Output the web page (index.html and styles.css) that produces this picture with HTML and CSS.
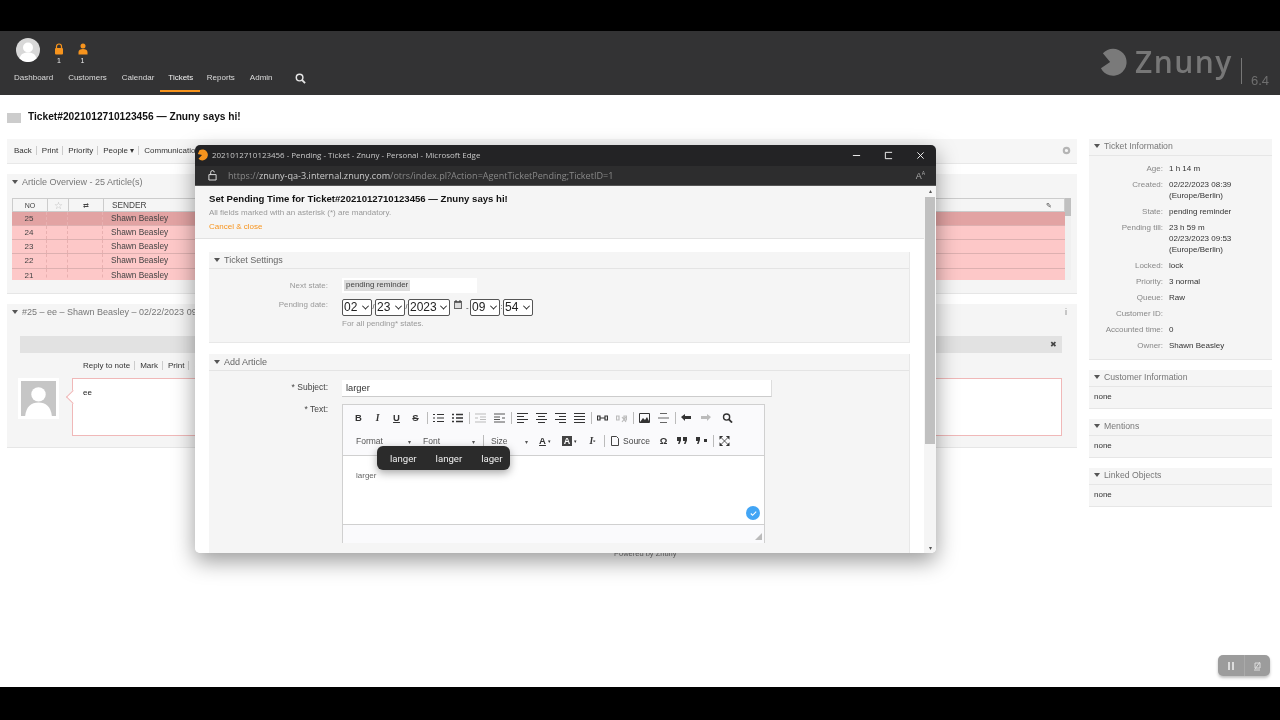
FILE: index.html
```html
<!DOCTYPE html>
<html lang="en">
<head>
    <meta charset="UTF-8">
    <title>Ticket#2021012710123456 - Znuny</title>
    <link rel="stylesheet" href="styles.css">
</head>
<body>
<div class="screen">
    <div class="topbar">
        <div class="topbar-left">
            <div class="user-row">
                <svg class="avatar" viewBox="0 0 24 24"><circle cx="12" cy="12" r="12" fill="#d8d8d8"/><circle cx="12" cy="9.5" r="5" fill="#fff"/><path d="M3.5 20.5c1-4.5 4.500-6 8.500-6s7.500 1.500 8.500 6a12 12 0 0 1-17 0z" fill="#fff"/></svg>
                <div class="counter">
                    <svg viewBox="0 0 10 12"><path d="M2.500 5V3.500a2.500 2.500 0 0 1 5 0V5" fill="none" stroke="#f7941d" stroke-width="1.200"/><rect x="1" y="5" width="8" height="6.500" rx="1" fill="#f7941d"/></svg>
                    <span>1</span>
                </div>
                <div class="counter">
                    <svg viewBox="0 0 10 12"><circle cx="5" cy="3" r="2.500" fill="#f7941d"/><path d="M0.500 11.500V9c0-2 2-3 4.500-3s4.500 1 4.500 3v2.500z" fill="#f7941d"/></svg>
                    <span>1</span>
                </div>
            </div>
            <nav class="nav">
                <a>Dashboard</a>
                <a>Customers</a>
                <a>Calendar</a>
                <a class="active">Tickets</a>
                <a>Reports</a>
                <a>Admin</a>
                <a class="nav-search"><svg viewBox="0 0 12 12" width="11" height="11"><circle cx="5" cy="5" r="3.600" fill="none" stroke="#e6e6e6" stroke-width="1.600"/><path d="M7.800 7.800L11 11" stroke="#e6e6e6" stroke-width="2"/></svg></a>
            </nav>
        </div>
        <div class="logo">
            <svg viewBox="0 0 30 30" width="29" height="29"><path d="M4 5.500A14 14 0 1 1 2 21L11.500 14.500z" fill="#7a7a7a"/></svg>
            <span class="logo-name">Znuny</span>
            <span class="logo-bar"></span>
            <span class="logo-ver">6.4</span>
        </div>
    </div>

    <div class="page">
        <h1 class="ticket-title"><span class="title-flag"></span>Ticket#2021012710123456 — Znuny says hi!</h1>
        <div class="columns">
            <div class="col-main">
                <div class="actions">
                    <a>Back</a><a>Print</a><a>Priority</a><a>People ▾</a><a>Communication</a>
                    <svg class="gear" viewBox="0 0 10 10" width="9" height="9"><circle cx="5" cy="5" r="3" fill="none" stroke="#b5b5b5" stroke-width="2.400"/></svg>
                </div>

                <section class="widget overview">
                    <div class="widget-head"><i class="tri"></i>Article Overview - 25 Article(s)</div>
                    <div class="table-outer">
                        <div class="table-wrap">
                            <div class="trow thead"><span class="c-no">NO</span><span class="c-star">☆</span><span class="c-dir">⇄</span><span class="c-sender">SENDER</span><span class="c-rest">✎</span></div>
                            <div class="trow sel"><span class="c-no">25</span><span class="c-star"></span><span class="c-dir"></span><span class="c-sender">Shawn Beasley</span><span class="c-rest"></span></div>
                            <div class="trow"><span class="c-no">24</span><span class="c-star"></span><span class="c-dir"></span><span class="c-sender">Shawn Beasley</span><span class="c-rest"></span></div>
                            <div class="trow"><span class="c-no">23</span><span class="c-star"></span><span class="c-dir"></span><span class="c-sender">Shawn Beasley</span><span class="c-rest"></span></div>
                            <div class="trow"><span class="c-no">22</span><span class="c-star"></span><span class="c-dir"></span><span class="c-sender">Shawn Beasley</span><span class="c-rest"></span></div>
                            <div class="trow last"><span class="c-no">21</span><span class="c-star"></span><span class="c-dir"></span><span class="c-sender">Shawn Beasley</span><span class="c-rest"></span></div>
                        </div>
                        <div class="table-scroll"><div class="table-thumb"></div></div>
                    </div>
                </section>

                <section class="widget article">
                    <div class="widget-head"><i class="tri"></i>#25 – ee – Shawn Beasley – 02/22/2023 09:39<span class="info-dot">i</span></div>
                    <div class="article-bar"><span>✖</span></div>
                    <div class="article-links"><a>Reply to note</a><a>Mark</a><a>Print</a><a>Split</a></div>
                    <div class="article-body">
                        <div class="article-avatar">
                            <svg viewBox="0 0 34 34"><rect width="34" height="34" fill="#c6c6c6"/><circle cx="17" cy="13" r="7" fill="#fff"/><path d="M4 34c1-9 6-13 13-13s12 4 13 13z" fill="#fff"/></svg>
                        </div>
                        <div class="bubble">ee</div>
                    </div>
                </section>
            </div>

            <aside class="col-side">
                <section class="side-box">
                    <div class="side-head"><i class="tri"></i>Ticket Information</div>
                    <dl class="info">
                        <dt>Age:</dt><dd>1 h 14 m</dd>
                        <dt>Created:</dt><dd>02/22/2023 08:39<br>(Europe/Berlin)</dd>
                        <dt>State:</dt><dd>pending reminder</dd>
                        <dt>Pending till:</dt><dd>23 h 59 m<br>02/23/2023 09:53<br>(Europe/Berlin)</dd>
                        <dt>Locked:</dt><dd>lock</dd>
                        <dt>Priority:</dt><dd>3 normal</dd>
                        <dt>Queue:</dt><dd>Raw</dd>
                        <dt>Customer ID:</dt><dd>&nbsp;</dd>
                        <dt>Accounted time:</dt><dd>0</dd>
                        <dt>Owner:</dt><dd>Shawn Beasley</dd>
                    </dl>
                </section>
                <section class="side-box">
                    <div class="side-head"><i class="tri"></i>Customer Information</div>
                    <div class="side-none">none</div>
                </section>
                <section class="side-box">
                    <div class="side-head"><i class="tri"></i>Mentions</div>
                    <div class="side-none">none</div>
                </section>
                <section class="side-box">
                    <div class="side-head"><i class="tri"></i>Linked Objects</div>
                    <div class="side-none">none</div>
                </section>
            </aside>
        </div>
        <div class="powered">Powered by Znuny</div>

        <div class="rec-controls">
            <span class="rec-btn"><svg viewBox="0 0 8 10" width="8" height="10"><rect x="1" y="1" width="2" height="8" fill="#ddd"/><rect x="5" y="1" width="2" height="8" fill="#ddd"/></svg></span>
            <span class="rec-btn"><svg viewBox="0 0 10 10" width="10" height="10"><path d="M2 9h6M3 2h5v5H3zM8 1L3 8" fill="none" stroke="#ddd" stroke-width="1"/></svg></span>
        </div>

        <!-- popup window floats over the page -->
        <div class="popup">
            <div class="pop-title">
                <svg class="pop-fav" viewBox="0 0 12 12" width="12" height="12"><path d="M2.500 1.200A5.500 5.500 0 1 1 1.500 9.800L5 6 .8 5z" fill="#f7941d"/></svg>
                <span class="pop-title-text">2021012710123456 - Pending - Ticket - Znuny - Personal - Microsoft Edge</span>
                <svg class="win-btn" viewBox="0 0 10 10"><path d="M1 5h8" stroke="#fff" stroke-width="1"/></svg>
                <svg class="win-btn" viewBox="0 0 10 10"><path d="M9 1.500H1.500v7H9" fill="none" stroke="#fff" stroke-width="1"/></svg>
                <svg class="win-btn" viewBox="0 0 10 10"><path d="M1.500 1.500l7 7M8.500 1.500l-7 7" stroke="#fff" stroke-width="1"/></svg>
            </div>
            <div class="pop-addr">
                <svg class="lock" viewBox="0 0 10 12" width="9" height="11"><path d="M1 5h8v6H1zM3 5V2.500a2 2 0 0 1 4 0" fill="none" stroke="#eee" stroke-width="1"/></svg>
                <span class="url"><b>https://</b>znuny-qa-3.internal.znuny.com<b>/otrs/index.pl?Action=AgentTicketPending;TicketID=1</b></span>
                <span class="read-icon">A<sup>A</sup></span>
            </div>
            <div class="pop-scroll">
                <div class="pop-content">
                    <div class="pop-header">
                        <h2>Set Pending Time for Ticket#2021012710123456 — Znuny says hi!</h2>
                        <p>All fields marked with an asterisk (*) are mandatory.</p>
                        <a>Cancel &amp; close</a>
                    </div>
                    <div class="pop-body">
                        <section class="pop-widget">
                            <div class="pop-widget-head"><i class="tri"></i>Ticket Settings</div>
                            <div class="form-row state-row">
                                <label>Next state:</label>
                                <div class="state-input"><span>pending reminder</span></div>
                            </div>
                            <div class="form-row date-row">
                                <label>Pending date:</label>
                                <div class="date-fields">
                                    <span class="sel-box">02<em></em></span><span class="sep">/</span>
                                    <span class="sel-box">23<em></em></span><span class="sep">/</span>
                                    <span class="sel-box wide">2023<em></em></span>
                                    <svg class="cal" viewBox="0 0 8 9" width="8" height="9"><path d="M0 1h8v8H0z" fill="#666"/><path d="M1 3h6v5H1z" fill="#ddd"/><path d="M2 0v2M6 0v2" stroke="#333"/></svg>
                                    <span class="dash">-</span>
                                    <span class="sel-box">09<em></em></span><span class="sep">:</span>
                                    <span class="sel-box">54<em></em></span>
                                </div>
                            </div>
                            <div class="form-hint">For all pending* states.</div>
                        </section>
                        <section class="pop-widget add">
                            <div class="pop-widget-head"><i class="tri"></i>Add Article</div>
                            <div class="form-row subject-row">
                                <label class="req">* Subject:</label>
                                <div class="subject-input">larger</div>
                            </div>
                            <div class="form-row text-row">
                                <label class="req">* Text:</label>
                                <div class="editor">
                                    <div class="ed-toolbar">
                                        <div class="ed-line">
                                            <span class="ic tb">B</span><span class="ic tb it">I</span><span class="ic tb un">U</span><span class="ic tb st">S</span><span class="ed-sep"></span>
                                            <span class="ic"><svg viewBox="0 0 11 10"><path d="M0 1.500h2M0 5h2M0 8.500h2M4 1.500h7M4 5h7M4 8.500h7" stroke="#333" stroke-width="1.200"/></svg></span>
                                            <span class="ic"><svg viewBox="0 0 11 10"><path d="M0 1.500h2M0 5h2M0 8.500h2M4 1.500h7M4 5h7M4 8.500h7" stroke="#333" stroke-width="1.300"/></svg></span><span class="ed-sep"></span>
                                            <span class="ic"><svg viewBox="0 0 11 10"><path d="M0 1h11M5 4h6M5 6.500h6M0 9h11M0 5h3" stroke="#bbb" stroke-width="1"/></svg></span>
                                            <span class="ic"><svg viewBox="0 0 11 10"><path d="M0 1h11M0 4h6M0 6.500h6M0 9h11M8 5h3" stroke="#555" stroke-width="1"/></svg></span><span class="ed-sep"></span>
                                            <span class="ic"><svg viewBox="0 0 11 10"><path d="M0 .500h11M0 3.500h7M0 6.500h11M0 9.500h7" stroke="#333"/></svg></span>
                                            <span class="ic"><svg viewBox="0 0 11 10"><path d="M0 .500h11M2 3.500h7M0 6.500h11M2 9.500h7" stroke="#333"/></svg></span>
                                            <span class="ic"><svg viewBox="0 0 11 10"><path d="M0 .500h11M4 3.500h7M0 6.500h11M4 9.500h7" stroke="#333"/></svg></span>
                                            <span class="ic"><svg viewBox="0 0 11 10"><path d="M0 .500h11M0 3.500h11M0 6.500h11M0 9.500h11" stroke="#333"/></svg></span><span class="ed-sep"></span>
                                            <span class="ic"><svg viewBox="0 0 11 10"><path d="M.5 3h2.500v4H.5zM8 3h2.500v4H8zM3 5h5" fill="none" stroke="#333" stroke-width="1.200"/></svg></span>
                                            <span class="ic"><svg viewBox="0 0 11 10"><path d="M.5 3h2.500v4H.5zM8 3h2.500v4H8zM6 4l4 5M10 4l-4 5" fill="none" stroke="#bbb" stroke-width="1.200"/></svg></span><span class="ed-sep"></span>
                                            <span class="ic"><svg viewBox="0 0 11 10"><path d="M.5.500h10v9H.5z" fill="none" stroke="#333"/><path d="M1 9l3-4 2 2 2-3 2.500 5z" fill="#333"/></svg></span>
                                            <span class="ic"><svg viewBox="0 0 11 10"><path d="M2 .500h7M0 5h11M2 9.500h7" stroke="#666"/></svg></span><span class="ed-sep"></span>
                                            <span class="ic"><svg viewBox="0 0 11 10"><path d="M0 4l4-3v2h6v3H4v2z" fill="#333"/></svg></span>
                                            <span class="ic"><svg viewBox="0 0 11 10"><path d="M11 4L7 1v2H1v3h6v2z" fill="#bbb"/></svg></span><span class="ed-gap"></span>
                                            <span class="ic"><svg viewBox="0 0 11 11"><circle cx="4.500" cy="4.500" r="3.400" fill="none" stroke="#333" stroke-width="1.500"/><path d="M7 7l3.500 3.500" stroke="#333" stroke-width="2"/></svg></span>
                                        </div>
                                        <div class="ed-line second">
                                            <span class="combo c-format">Format<em>▾</em></span><span class="combo c-font">Font<em>▾</em></span><span class="ed-sep"></span><span class="combo c-size">Size<em>▾</em></span>
                                            <span class="ic i-color"><u>A</u><small>▾</small></span><span class="ic i-back"><i>A</i><small>▾</small></span><span class="ic tb it">I<sub>x</sub></span><span class="ed-sep"></span>
                                            <span class="source"><svg viewBox="0 0 8 10" width="8" height="10"><path d="M.5.500h5l2 2v7h-7z" fill="none" stroke="#444"/></svg>Source</span>
                                            <span class="ic tb">Ω</span>
                                            <span class="ic"><svg viewBox="0 0 11 10"><path d="M0 1h4v3.500L2.500 8H1l1-3H0zM6 1h4v3.500L8.500 8H7l1-3H6z" fill="#333"/></svg></span>
                                            <span class="ic"><svg viewBox="0 0 11 10"><path d="M4 1v3L2.500 8H1l1-3H0V1zM8 3h3v3H8zM6 8l3-3" fill="#333"/></svg></span><span class="ed-sep"></span>
                                            <span class="ic"><svg viewBox="0 0 11 11"><path d="M0 0h4L0 4zM11 0v4L7 0zM0 11V7l4 4zM11 11H7l4-4z" fill="#333"/><path d="M2 2l7 7M9 2l-7 7" stroke="#333" stroke-width=".9"/></svg></span>
                                        </div>
                                    </div>
                                    <div class="ed-area">
                                        <span class="ed-text">larger</span>
                                        <span class="spell-check"><svg viewBox="0 0 10 10" width="9" height="9"><path d="M2 5l2 2 4-4" fill="none" stroke="#fff" stroke-width="1.200"/></svg></span>
                                    </div>
                                    <div class="ed-foot"><i class="resize"></i></div>
                                </div>
                            </div>
                            <div class="suggest"><span>langer</span><span>langer</span><span>lager</span></div>
                        </section>
                    </div>
                </div>
                <div class="pop-scrollbar"><span class="arrow">▴</span><div class="thumb"></div><span class="arrow">▾</span></div>
            </div>
        </div>
    </div>
</div>
</body>
</html>
```

FILE: styles.css
```css
* { box-sizing: border-box; }
html, body { margin: 0; height: 100%; }
body { background: #000; font-family: "Liberation Sans", Arial, sans-serif; font-size: 8px; color: #333; overflow: hidden; }

/* the source is a compressed video frame, a little soft */
.screen { height: 720px; padding: 31px 0 33px; filter: blur(.35px); }

/* header */
.topbar { height: 64px; background: #333334; display: flex; justify-content: space-between; }
.topbar-left { padding: 7px 0 0 14px; }
.user-row { display: flex; height: 26px; align-items: flex-start; padding-left: 2px; }
.avatar { width: 24px; height: 24px; margin-right: 14px; }
.counter { width: 23.500px; color: #eee; font-size: 7px; line-height: 8px; }
.counter svg { display: block; width: 10px; height: 12px; margin: 5px 0 2px 0; }
.counter span { display: block; width: 10px; text-align: center; }
.nav { display: flex; margin-top: 5px; }
.nav a { color: #dcdcdc; font-size: 8px; height: 26px; padding: 4px 0 0; margin-right: 15px; }
.nav a.active { color: #f0f0f0; border-bottom: 2px solid #f7941d; height: 23px; padding: 4px 7px 0 8px; margin: 0 6.500px 0 -9px; }
.nav-search { margin-left: 7px; }
.logo { display: flex; align-items: center; padding-right: 11px; height: 64px; color: #777; }
.logo svg { margin-right: 7px; margin-top: -1px; }
.logo-name { font-family: "Open Sans", sans-serif; font-size: 30px; font-weight: 600; line-height: 40px; letter-spacing: 1.500px; margin-top: -3px; }
.logo-bar { width: 1px; height: 26px; background: #777; margin: 15px 9px 0 8px; }
.logo-ver { font-size: 13px; margin-top: 34px; color: #6f6f6f; }

/* page */
.page { position: relative; height: 592px; background: #fff; padding: 0 8px 0 7px; }
.ticket-title { margin: 0; height: 44px; padding-top: 16px; font-size: 10.200px; line-height: 12px; color: #111; display: flex; align-items: flex-start; }
.title-flag { width: 14px; height: 10px; background: #ccc; margin: 2px 7px 0 0; }
.columns { display: flex; gap: 12px; }
.col-main { width: 1070px; }
.col-side { width: 183px; }

.actions { height: 25px; background: #f6f6f6; border-bottom: 1px solid #e8e8e8; display: flex; align-items: center; padding: 0 7px 2px; position: relative; color: #333; }
.actions a { padding-right: 4px; margin-right: 5px; border-right: 1px solid #ccc; line-height: 9px; }
.actions a:last-of-type { border: 0; }
.gear { position: absolute; right: 6px; top: 7px; }

.widget { background: #f5f5f5; border-bottom: 1px solid #e6e6e6; }
.widget-head { height: 17px; color: #777; font-size: 9px; padding: 3px 0 0 5px; position: relative; }
.tri { display: inline-block; width: 0; height: 0; border: 3.500px solid transparent; border-top: 4px solid currentColor; border-bottom: 0; margin-right: 4px; vertical-align: 1px; color: #555; }
.overview { margin-top: 10px; height: 120px; }
.overview .widget-head { height: 24px; padding-top: 3px; }
.table-outer { display: flex; margin: 0 6px 0 5px; height: 82px; }
.table-wrap { flex: 1; overflow: hidden; }
.table-scroll { width: 6px; background: #f0f0f0; }
.table-thumb { height: 18px; background: #c0c0c0; }
.trow { display: flex; height: 14.300px; line-height: 13px; background: #fdc8c8; border-bottom: 1px solid #ddb0b0; }
.trow span { border-right: 1px dashed #e8b0b0; padding: 0; text-align: center; color: #444; }
.trow.last { border-bottom: 0; }
.trow.sel { background: #e2a3a3; }
.thead { background: #f5f5f5; border: 1px solid #ccc; height: 13.500px; font-size: 7px; }
.thead span { border-right: 1px solid #ccc; }
.c-no { width: 35px; flex: none; }
.c-star { width: 21px; flex: none; font-size: 10px; color: #bbb !important; }
.c-dir { width: 35px; flex: none; }
.c-sender { width: 130px; flex: none; text-align: left !important; padding-left: 8px !important; font-size: 8.300px; }
.c-rest { flex: 1; text-align: right !important; padding-right: 12px !important; border: 0 !important; }

.article { margin-top: 10px; height: 144px; }
.info-dot { position: absolute; right: 10px; top: 3px; color: #888; }
.article-bar { margin: 15px 15px 0 13px; height: 17px; background: #e2e2e2; display: flex; justify-content: flex-end; align-items: center; padding-right: 5px; color: #444; font-size: 8px; }
.article-links { height: 25px; padding: 8px 0 0 76px; display: flex; }
.article-links a { padding-right: 4px; margin-right: 5px; border-right: 1px solid #ccc; line-height: 9px; height: 9px; }
.article-body { display: flex; padding-left: 11px; margin-right: 15px; }
.article-avatar { width: 41px; height: 41px; background: #fff; padding: 3px; }
.article-avatar svg { display: block; width: 35px; height: 35px; }
.bubble { flex: 1; margin-left: 13px; height: 58px; background: #fff; border: 1px solid #f0b8b8; padding: 9px 10px; position: relative; color: #222; }
.bubble::before { content: ""; position: absolute; left: -5px; top: 13px; width: 9px; height: 9px; background: #fff; border-left: 1px solid #f0b8b8; border-bottom: 1px solid #f0b8b8; transform: rotate(45deg); }

.side-box { background: #f5f5f5; border-bottom: 1px solid #e6e6e6; margin-bottom: 10px; }
.side-head { height: 17px; border-bottom: 1px solid #e6e6e6; color: #777; font-size: 8.700px; padding: 2px 0 0 5px; }
.info { margin: 0; display: grid; grid-template-columns: 74px 1fr; column-gap: 6px; row-gap: 5px; padding: 7px 0 8px; line-height: 11px; }
.info dt { text-align: right; color: #888; }
.info dd { margin: 0; color: #333; }
.side-none { height: 21px; padding: 5px 0 0 5px; color: #333; }
.side-box:nth-child(2) { margin-top: 2px; }

.powered { position: absolute; left: 614px; top: 454px; color: #777; font-size: 7.500px; }
.rec-controls { position: absolute; left: 1218px; top: 560px; width: 52px; height: 21px; background: #9c9c9c; border-radius: 5px; display: flex; box-shadow: 0 2px 3px rgba(0,0,0,.25); }
.rec-btn { flex: 1; display: flex; align-items: center; justify-content: center; }
.rec-btn:first-child { border-right: 1px solid #aaa; }

/* popup window */
.popup { position: absolute; left: 195px; top: 50px; width: 741px; height: 408px; border-radius: 5px; overflow: hidden; background: #f5f5f5; box-shadow: 0 8px 22px rgba(0,0,0,.4); display: flex; flex-direction: column; }
.pop-title { height: 21px; flex: none; background: #232325; display: flex; align-items: center; padding: 0 0 1px 2px; color: #ccc; }
.pop-fav { margin-right: 3px; }
.pop-title-text { flex: 1; font-family: "Open Sans", sans-serif; font-size: 7.950px; white-space: nowrap; color: #c8c8c8; }
.win-btn { width: 9px; height: 9px; margin: 0 11px 0 12px; flex: none; }
.pop-addr { height: 20px; flex: none; background: #2d2d2e; border-bottom: 1px solid #555; display: flex; align-items: center; padding: 0 11px 0 13px; }
.lock { margin-right: 11px; }
.url { flex: 1; font-family: "Open Sans", sans-serif; font-size: 9.100px; color: #ccc; white-space: nowrap; }
.url b { font-weight: 400; color: #888; }
.read-icon { color: #aaa; font-size: 9px; }
.read-icon sup { font-size: 5px; }

.pop-scroll { flex: 1; display: flex; min-height: 0; background: #fff; }
.pop-content { flex: 1; overflow: hidden; }
.pop-scrollbar { width: 12px; background: #f5f5f5; display: flex; flex-direction: column; align-items: center; font-size: 6px; color: #555; line-height: 11px; }
.pop-scrollbar .arrow { height: 11px; flex: none; }
.thumb { width: 10px; height: 247px; background: #c0c0c0; flex: none; margin-bottom: 99px; }
.pop-header { height: 53px; background: #f5f5f5; border-bottom: 1px solid #e2e2e2; padding: 7px 14px 0; }
.pop-header h2 { margin: 0; font-size: 9.600px; line-height: 11px; color: #111; }
.pop-header p { margin: 3px 0 0; font-size: 8px; line-height: 11px; color: #999; }
.pop-header a { display: block; margin-top: 3px; font-size: 8px; line-height: 11px; color: #f7941d; }
.pop-body { padding: 13px 14px 0 14px; }
.pop-widget { background: #f5f5f5; border-right: 1px solid #e8e8e8; border-bottom: 1px solid #e8e8e8; width: 701px; height: 91px; position: relative; }
.pop-widget.add { margin-top: 11px; height: 300px; }
.pop-widget-head { height: 17px; border-bottom: 1px solid #e4e4e4; color: #666; font-size: 9px; padding: 3px 0 0 5px; }
.form-row { display: flex; }
.form-row label { width: 119px; text-align: right; color: #999; flex: none; margin-right: 14px; }
.state-row { margin-top: 9px; height: 15px; align-items: center; }
.state-input { width: 135px; height: 15px; background: #fff; padding: 2px 2px; }
.state-input span { display: inline-block; background: #dcdcdc; color: #444; padding: 0 2px; line-height: 10px; height: 11px; font-size: 8px; }
.date-row { margin-top: 6px; height: 18px; }
.date-row label { padding-top: 1px; }
.date-fields { display: flex; align-items: flex-start; }
.sel-box { height: 17px; width: 30px; border: 1px solid #555; border-radius: 2px; background: #fff; font-size: 12px; line-height: 15px; color: #222; padding-left: 1px; position: relative; white-space: nowrap; }
.sel-box.wide { width: 42px; }
.sel-box em { position: absolute; right: 3px; top: 5px; width: 5px; height: 5px; border-right: 1.400px solid #222; border-bottom: 1.400px solid #222; transform: rotate(45deg) translate(-1px,-1px); }
.sep { width: 3px; font-size: 7px; text-align: center; line-height: 16px; }
.cal { margin: 1px 4px 0 4px; }
.dash { width: 4px; line-height: 18px; }
.form-hint { margin: 2px 0 0 133px; color: #999; font-size: 8px; }

.subject-row { margin-top: 9px; height: 18px; }
.form-row label.req { color: #444; font-size: 8.500px; padding-top: 2px; }
.subject-input { width: 430px; height: 17px; background: #fff; border-bottom: 1px solid #ccc; border-right: 1px solid #ddd; font-size: 9.300px; line-height: 16px; padding-left: 4px; color: #333; }
.text-row { margin-top: 6px; }
.text-row label.req { padding-top: 0; }
.editor { width: 423px; border: 1px solid #d0d0d0; border-bottom: 0; height: 139px; display: flex; flex-direction: column; background: #fafafc; }
.ed-toolbar { height: 51px; flex: none; border-bottom: 1px solid #d0d0d0; padding: 1px 0 0 6px; }
.ed-line { display: flex; align-items: center; height: 23px; }
.ic { width: 19px; height: 12px; flex: none; display: flex; align-items: center; justify-content: center; color: #333; white-space: nowrap; }
.ic svg { width: 11px; height: 10px; display: block; }
.tb { font-size: 9.500px; font-weight: bold; }
.tb.it { font-style: italic; font-family: "Liberation Serif", serif; }
.tb.un { text-decoration: underline; }
.tb.st { text-decoration: line-through; }
.tb sub { font-size: 5px; line-height: 5px; }
.ed-sep { width: 1px; height: 12px; background: #bbb; flex: none; margin: 0 1px 0 2px; }
.ed-gap { width: 3px; flex: none; }
.combo { flex: none; padding-left: 6px; font-size: 8.500px; color: #555; position: relative; }
.combo em { position: absolute; right: 6px; top: 2px; font-style: normal; font-size: 6px; }
.c-format { width: 67px; }
.c-font { width: 64px; }
.c-size { width: 49px; }
.second { margin-left: 1px; }
.i-color { width: 22px; font-size: 9.500px; font-weight: bold; }
.i-back { width: 27px; font-size: 9px; font-weight: bold; }
.i-back i { background: #444; color: #fff; font-style: normal; padding: 0 1.500px; line-height: 10px; }
.ic small { font-size: 5px; font-weight: normal; margin-left: 2px; }
.source { width: 48px; flex: none; display: flex; align-items: center; gap: 4px; padding-left: 5px; font-size: 8.500px; color: #444; white-space: nowrap; }
.ed-area { height: 69px; flex: none; background: #fff; border-bottom: 1px solid #d0d0d0; position: relative; padding: 15px 0 0 13px; }
.ed-text { font-size: 8px; color: #666; }
.spell-check { position: absolute; right: 4px; bottom: 4px; width: 14px; height: 14px; border-radius: 50%; background: #42a5f5; display: flex; align-items: center; justify-content: center; }
.ed-foot { flex: 1; position: relative; }
.resize { position: absolute; right: 2px; bottom: 3px; width: 0; height: 0; border-left: 7px solid transparent; border-bottom: 7px solid #bbb; }
.suggest { position: absolute; left: 168px; top: 92px; height: 24px; width: 133px; background: #2b2b2b; border-radius: 6px; box-shadow: 0 3px 8px rgba(0,0,0,.35); display: flex; align-items: center; padding: 0 0 0 13px; gap: 19px; color: #eee; font-family: Roboto, sans-serif; font-size: 9.600px; }
```
